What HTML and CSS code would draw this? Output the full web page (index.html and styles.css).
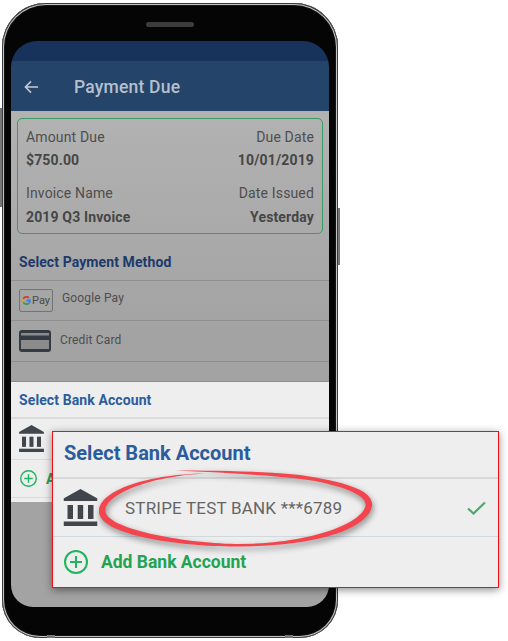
FILE: index.html
```html
<!DOCTYPE html>
<html lang="en">
<head>
<meta charset="utf-8">
<title>Payment Due</title>
<link rel="stylesheet" href="styles.css">
</head>
<body>
<div class="stage">
  <div class="phone">
    <i class="btn btn-left"></i>
    <i class="btn btn-right"></i>
    <i class="tab tab-l"></i>
    <i class="tab tab-r"></i>
    <i class="speaker"></i>
    <div class="screen">
      <div class="status"></div>
      <div class="appbar">
        <svg class="back" viewBox="0 0 16 14" width="15" height="14"><path d="M15 7H1.5M7.500 1L1.500 7l6 6" fill="none" stroke="#c3ccd8" stroke-width="1.600"/></svg>
        <span class="apptitle">Payment Due</span>
      </div>
      <div class="content">
        <div class="card">
          <div class="card-row">
            <div class="cell"><span class="lbl">Amount Due</span><b class="val">$750.00</b></div>
            <div class="cell end"><span class="lbl">Due Date</span><b class="val">10/01/2019</b></div>
          </div>
          <div class="card-row">
            <div class="cell"><span class="lbl">Invoice Name</span><b class="val">2019 Q3 Invoice</b></div>
            <div class="cell end"><span class="lbl">Date Issued</span><b class="val">Yesterday</b></div>
          </div>
        </div>
        <div class="method-title">Select Payment Method</div>
        <div class="method gpay-row">
          <span class="gpay">
            <svg viewBox="0 0 10 10" width="9" height="9"><path d="M5 5h4a4 4 0 0 1-1.400 3" fill="none" stroke="#3f7fe0" stroke-width="2"/><path d="M7.600 8A4 4 0 0 1 1.400 6.800" fill="none" stroke="#3a9a50" stroke-width="2"/><path d="M1.400 6.800a4 4 0 0 1 0-3.600" fill="none" stroke="#d8a520" stroke-width="2"/><path d="M1.400 3.200A4 4 0 0 1 7.800 2.200" fill="none" stroke="#c8402f" stroke-width="2"/></svg>
            <span class="gpay-txt">Pay</span>
          </span>
          <span class="method-name">Google Pay</span>
        </div>
        <div class="method card-row-m">
          <svg class="ccard" viewBox="0 0 32 22" width="32" height="22"><rect width="32" height="22" rx="3" fill="#333a42"/><rect x="2" y="3" width="28" height="2.500" fill="#8b8b8b"/><rect x="2" y="10" width="28" height="9" fill="#8b8b8b"/></svg>
          <span class="method-name">Credit Card</span>
        </div>
        <div class="spacer"></div>
        <div class="sheet">
          <div class="sheet-title">Select Bank Account</div>
          <div class="sheet-bank">
            <svg viewBox="0 0 34 37" width="25" height="27"><use href="#bank"/></svg>
          </div>
          <div class="sheet-add">
            <svg viewBox="0 0 24 24" width="17" height="17"><use href="#plus"/></svg>
            <span>Add Bank Account</span>
          </div>
        </div>
      </div>
    </div>
  </div>

  <div class="callout">
    <div class="call-title">Select Bank Account</div>
    <div class="call-bank">
      <svg class="call-bank-icon" viewBox="0 0 34 37" width="35" height="37">
        <symbol id="bank" viewBox="0 0 34 37">
          <path d="M17 0L34 9.500V12H0V9.500z" fill="#41464c"/>
          <rect x="4" y="16" width="5.500" height="14" fill="#41464c"/>
          <rect x="14.200" y="16" width="5.500" height="14" fill="#41464c"/>
          <rect x="24.500" y="16" width="5.500" height="14" fill="#41464c"/>
          <rect x="0" y="32.500" width="34" height="4.500" fill="#41464c"/>
        </symbol>
        <use href="#bank"/>
      </svg>
      <span class="bank-name">STRIPE TEST BANK ***6789</span>
      <svg class="check" viewBox="0 0 19 14" width="19" height="14"><path d="M1 7.500L6.500 12.500 18 1.500" fill="none" stroke="#49ab6c" stroke-width="2.200"/></svg>
    </div>
    <div class="call-add">
      <svg viewBox="0 0 24 24" width="24" height="24">
        <symbol id="plus" viewBox="0 0 24 24">
          <circle cx="12" cy="12" r="11" fill="none" stroke="#1fb45f" stroke-width="2"/>
          <path d="M12 6v12M6 12h12" stroke="#1fb45f" stroke-width="2"/>
        </symbol>
        <use href="#plus"/>
      </svg>
      <span>Add Bank Account</span>
    </div>
  </div>

  <svg class="scribble" viewBox="0 0 508 641" width="508" height="641">
    <path d="M205 473.500C150 474 98 490 99 512C100 535 180 547 240 546.500C320 546 368 528 372 506C374 490 345 482 300 475C260 471 210 470.500 175 470.500C220 472.500 275 475 315 481C349 488 367 496 365.500 506C361 524 310 543.500 240 544C190 544 109 530 105.500 512C103 495 150 476 205 473.500Z" fill="#f4444e"/>
  </svg>
</div>
</body>
</html>
```

FILE: styles.css
```css
* { box-sizing: border-box; }
html, body { margin: 0; padding: 0; background: #fff; }
body { font-family: Roboto, "Liberation Sans", sans-serif; }
.stage { position: relative; width: 508px; height: 641px; overflow: hidden; padding: 3px 0 0 2px; }

.phone {
  position: relative;
  width: 336px;
  height: 635px;
  padding: 38px 9px 31px;
  background: #050505;
  border-radius: 44px 44px 38px 38px;
  box-shadow: inset 0 0 0 1px #3a3a3a, inset 0 0 0 2px #c4c4c4, inset 0 0 0 3px #141414;
}
.speaker { position: absolute; left: 144px; top: 19px; width: 48px; height: 5px; border-radius: 3px; background: #3c3c3c; }
.btn { position: absolute; width: 2px; background: #777; }
.btn-left { left: -2px; top: 105px; height: 99px; }
.btn-right { right: -2px; top: 205px; height: 57px; }
.tab { position: absolute; bottom: 0; width: 8px; height: 3px; background: #777; }
.tab-l { left: 45px; }
.tab-r { right: 45px; }

.screen {
  display: flex;
  flex-direction: column;
  width: 318px;
  height: 566px;
  border-radius: 26px 26px 22px 22px;
  overflow: hidden;
}
.status { height: 20px; background: #17335b; flex: none; }
.appbar { height: 50px; flex: none; display: flex; align-items: center; background: #254469; padding: 1px 0 0 13px; }
.back { flex: none; }
.apptitle { margin-left: 35px; padding-top: 1px; font-size: 17.500px; font-weight: 500; color: #b5c0cf; letter-spacing: .2px; }

.content { flex: 1; display: flex; flex-direction: column; background: linear-gradient(#b2b2b2, #a3a3a3 45%, #a3a3a3); }
.card {
  flex: none;
  height: 116px;
  margin: 7px 6px 0;
  padding: 9px 8px 0 8px;
  border: 1px solid #3d9a62;
  border-radius: 5px;
  display: flex;
  flex-direction: column;
  gap: 14px;
}
.card-row { display: flex; justify-content: space-between; }
.cell { display: flex; flex-direction: column; gap: 4px; }
.card-row + .card-row .cell { gap: 5px; }
.cell.end { align-items: flex-end; }
.lbl { font-size: 14px; line-height: 19px; color: #4e4e4e; letter-spacing: .15px; }
.val { font-size: 14px; line-height: 19px; font-weight: 700; color: #464646; letter-spacing: .15px; }

.method-title { flex: none; height: 46px; padding: 19px 0 0 8px; font-size: 14px; line-height: 19px; font-weight: 700; color: #1d3a6b; letter-spacing: .1px; }
.method { flex: none; display: flex; border-top: 1px solid #8e8e8e; padding-left: 8px; }
.gpay-row { height: 40px; padding-top: 8px; }
.card-row-m { height: 42px; padding-top: 9px; border-bottom: 1px solid #8e8e8e; }
.gpay { display: flex; align-items: center; justify-content: center; gap: 1px; width: 34px; height: 23px; border: 1px solid #737373; border-radius: 2px; }
.gpay-txt { font-size: 11px; color: #4a4a4a; }
.method-name { font-size: 12px; line-height: 16px; color: #4d4d4d; letter-spacing: .15px; margin-left: 9px; }
.gpay-row .method-name { margin-top: 1px; }
.card-row-m .method-name { margin-left: 9px; margin-top: 2px; }
.ccard { flex: none; }
.spacer { flex: none; height: 19px; }

.sheet { flex: none; height: 121px; background: #eeeeee; border-top: 1px solid #8e8e8e; }
.sheet-title { height: 37px; padding: 9px 0 0 8px; font-size: 14px; line-height: 19px; font-weight: 700; color: #2b5c9c; border-bottom: 2px solid #dcdcdc; letter-spacing: .1px; }
.sheet-bank { height: 41px; padding: 6px 0 0 8px; border-bottom: 1px solid #d5dbe1; }
.sheet-add { display: flex; align-items: center; height: 38px; padding-left: 9px; gap: 9px; border-bottom: 1px solid #d5dbe1; font-size: 14px; font-weight: 700; color: #22a352; }

.callout {
  position: absolute;
  left: 52px;
  top: 431px;
  width: 447px;
  height: 157px;
  background: #eeeeee;
  border: 1px solid #f60d14;
  box-shadow: 0 2px 8px rgba(0,0,0,.45);
  display: flex;
  flex-direction: column;
}
.call-title { flex: none; height: 47px; padding: 8px 0 0 11px; font-size: 20px; line-height: 26px; font-weight: 700; color: #2b5c9c; border-bottom: 2px solid #d8d8d8; }
.call-bank { flex: none; height: 58px; display: flex; align-items: center; padding: 0 11px 0 10px; border-bottom: 1px solid #d0d7df; }
.call-bank-icon { flex: none; }
.bank-name { margin-left: 27px; font-size: 17px; color: #656565; letter-spacing: .2px; }
.check { margin-left: auto; margin-right: 1px; }
.call-add { flex: 1; display: flex; align-items: center; padding-left: 11px; gap: 13px; font-size: 17.500px; font-weight: 700; color: #22a352; }

.scribble { position: absolute; left: 0; top: 0; pointer-events: none; filter: drop-shadow(1px 3px 3px rgba(0,0,0,.45)); }
```
